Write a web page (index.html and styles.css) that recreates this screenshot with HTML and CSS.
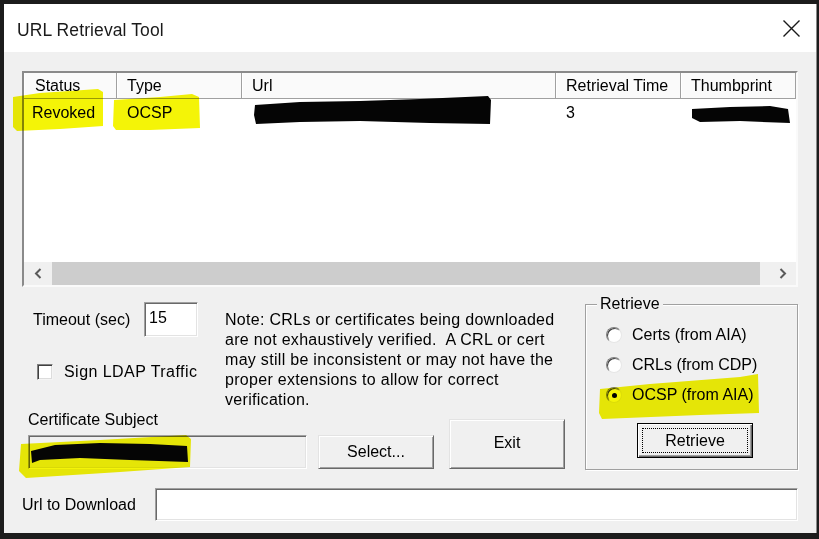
FILE: index.html
```html
<!DOCTYPE html>
<html lang="en">
<head>
  <meta charset="UTF-8" />
  <title>URL Retrieval Tool</title>
  <link rel="stylesheet" href="styles.css">
</head>
<body>

  <div class="window">
    <div class="titlebar">
      <span class="title">URL Retrieval Tool</span>
      <svg class="close" width="17" height="17" viewBox="0 0 17 17">
        <path d="M0.5 0.5L16.5 16.5M16.5 0.5L0.5 16.5" stroke="#1a1a1a" stroke-width="1.4" fill="none" />
      </svg>
    </div>

    <div class="client">
      <div class="listview">
        <div class="lv-head">
          <div class="col c-status">Status</div>
          <div class="col c-type">Type</div>
          <div class="col c-url">Url</div>
          <div class="col c-time">Retrieval Time</div>
          <div class="col c-thumb">Thumbprint</div>
        </div>
        <div class="lv-body">
          <div class="lv-row">
            <div class="col c-status first">Revoked</div>
            <div class="col c-type">OCSP</div>
            <div class="col c-url"></div>
            <div class="col c-time">3</div>
            <div class="col c-thumb"></div>
          </div>
        </div>
        <div class="hscroll">
          <div class="sb-btn">
            <svg width="8" height="11" viewBox="0 0 8 11"><path d="M6.5 1L2 5.5L6.5 10" stroke="#5a5a5a" stroke-width="2" fill="none" /></svg>
          </div>
          <div class="sb-track"><div class="sb-thumb"></div></div>
          <div class="sb-btn">
            <svg width="8" height="11" viewBox="0 0 8 11"><path d="M1.5 1L6 5.5L1.5 10" stroke="#5a5a5a" stroke-width="2" fill="none" /></svg>
          </div>
        </div>
      </div>

      <div class="lower">
        <div class="lower-left">
          <div class="upper-row">
            <div class="opts">
              <div class="timeout">
                <label for="timeout">Timeout (sec)</label>
                <input class="field" id="timeout" type="text" value="15" />
              </div>
              <div class="check">
                <span class="checkbox"></span>
                <span class="check-label">Sign LDAP Traffic</span>
              </div>
            </div>
            <p class="note">
              Note: CRLs or certificates being downloaded<br>
              are not exhaustively verified.&nbsp; A CRL or cert<br>
              may still be inconsistent or may not have the<br>
              proper extensions to allow for correct<br>
              verification.
            </p>
          </div>
          <div class="subject-row">
            <div class="subject">
              <div class="subject-label">Certificate Subject</div>
              <div class="field subject-field"></div>
            </div>
            <button class="btn btn-select">Select...</button>
            <button class="btn btn-exit">Exit</button>
          </div>
        </div>

        <fieldset class="group">
          <legend>Retrieve</legend>
          <div class="radio"><span class="dot"></span>Certs (from AIA)</div>
          <div class="radio"><span class="dot"></span>CRLs (from CDP)</div>
          <div class="radio"><span class="dot on"></span>OCSP (from AIA)</div>
          <button class="btn btn-default"><span class="focus">Retrieve</span></button>
        </fieldset>
      </div>

      <div class="url-row">
        <span class="url-label">Url to Download</span>
        <div class="field url-field"></div>
      </div>
    </div>
  </div>

  <!-- highlighter and redaction marks drawn over the dialog -->
  <svg class="marks" width="819" height="539" viewBox="0 0 819 539">
    <g fill="#f4f407">
      <polygon points="13,97 40,93 98,89 103,92 103,126 60,129 17,131 13,127" />
      <polygon points="114,100 160,97 192,94 199,97 200,128 150,130 116,130 113,126" />
      <polygon points="21,444 100,440 186,435 191,439 190,467 120,472 26,478 19,471" />
      <polygon points="600,389 650,384 740,377 758,374 759,413 700,415 602,419 599,413" />
    </g>
    <g fill="#050505">
      <polygon points="255,105 300,102 360,101 420,99 488,96 491,100 490,124 430,123 360,121 300,122 256,124 254,115" />
      <polygon points="692,109 730,107 770,106 788,109 790,123 740,121 700,122 692,118" />
      <polygon points="31,451 55,445 100,443 150,444 187,446 188,462 130,460 80,458 40,460 32,463" />
    </g>
  </svg>

</body>
</html>
```

FILE: styles.css
```css
* {
  margin: 0;
  padding: 0;
  box-sizing: border-box;
}
body {
  background-color: #1c1c1c;
  font-family: "Liberation Sans", Arial, sans-serif;
  font-size: 16px;
  color: #000;
  padding: 4px 0 0 4px;
  height: 539px;
  overflow: hidden;
}
.window {
  width: 813px;
  height: 529px;
  background-color: #f0f0f0;
  border-right: 1px solid #8a8a8a;
}
.titlebar {
  height: 48px;
  background-color: #fff;
  display: flex;
  align-items: center;
  justify-content: space-between;
  padding: 4px 16px 0 13px;
}
.title {
  font-size: 17.5px;
  letter-spacing: 0.1px;
  color: #1a1a1a;
}
.close {
  margin-top: -4px;
}
.client {
  padding: 19px 18px 0 18px;
}

/* list view */
.listview {
  height: 216px;
  display: flex;
  flex-direction: column;
  background-color: #fff;
  border: 2px solid;
  border-color: #8a8a8a #fafafa #fafafa #8a8a8a;
}
.lv-head, .lv-row {
  display: flex;
}
.col {
  white-space: nowrap;
  overflow: hidden;
  padding-left: 10px;
}
.c-status { width: 93px; }
.c-type { width: 125px; }
.c-url { width: 314px; }
.c-time { width: 125px; }
.c-thumb { flex: 1; }
.lv-head {
  height: 26px;
  background-color: #fafafa;
}
.lv-head .col {
  line-height: 26px;
  box-shadow: inset -1px -1px #a0a0a0, inset 1px 0 #fff;
}
.lv-head .c-status {
  padding-left: 11px;
}
.lv-body {
  flex: 1;
}
.lv-row .col {
  line-height: 28px;
}
.lv-row .first {
  padding-left: 8px;
}
.hscroll {
  height: 23px;
  display: flex;
  background-color: #f0f0f0;
}
.sb-btn {
  width: 27px;
  display: flex;
  align-items: center;
  justify-content: center;
}
.sb-track {
  flex: 1;
  padding: 0 9px 0 1px;
}
.sb-thumb {
  height: 100%;
  background-color: #cdcdcd;
}

/* common controls */
.field {
  font: inherit;
  background-color: #fff;
  border: 1px solid;
  border-color: #a0a0a0 #fff #fff #a0a0a0;
  box-shadow: inset 1px 1px #696969, inset -1px -1px #e3e3e3;
}
.btn {
  font: inherit;
  color: #000;
  background-color: #f0f0f0;
  border: 1px solid;
  border-color: #e3e3e3 #696969 #696969 #e3e3e3;
  box-shadow: inset 1px 1px #fff, inset -1px -1px #a0a0a0;
}

/* lower area */
.lower {
  display: flex;
  margin-top: 7px;
  height: 176px;
}
.lower-left {
  width: 563px;
}
.upper-row {
  display: flex;
  height: 116px;
}
.opts {
  width: 203px;
}
.timeout {
  display: flex;
  align-items: center;
  margin-top: 8px;
  padding-left: 11px;
  height: 35px;
}
.timeout label {
  width: 111px;
}
.timeout input {
  width: 54px;
  height: 35px;
  padding: 0 0 4px 4px;
  outline: none;
}
.check {
  display: flex;
  align-items: center;
  margin-top: 25px;
  padding-left: 15px;
  height: 20px;
}
.check-label {
  letter-spacing: 0.45px;
}
.checkbox {
  width: 16px;
  height: 16px;
  margin-right: 11px;
  background-color: #fff;
  border: 1px solid;
  border-color: #808080 #f4f4f4 #f4f4f4 #808080;
  box-shadow: inset 1px 1px #404040, inset -1px -1px #dcdcdc;
}
.note {
  margin-top: 16px;
  line-height: 20px;
  letter-spacing: 0.3px;
  white-space: nowrap;
}
.subject-row {
  display: flex;
  align-items: flex-end;
  height: 59px;
  padding-left: 6px;
}
.subject-label {
  line-height: 20px;
}
.subject-field {
  margin-top: 5px;
  width: 279px;
  height: 34px;
  background-color: #f0f0f0;
}
.btn-select {
  margin-left: 11px;
  width: 116px;
  height: 34px;
}
.btn-exit {
  margin-left: 15px;
  width: 116px;
  height: 50px;
  padding-bottom: 2px;
}

/* retrieve group */
.group {
  width: 213px;
  height: 176px;
  border: 1px solid #a0a0a0;
  box-shadow: 1px 1px #fff, inset 1px 1px #fff;
}
.group legend {
  margin-left: 11px;
  padding: 0 3px;
  line-height: 20px;
  background-color: #f0f0f0;
}
.radio {
  display: flex;
  align-items: center;
  height: 20px;
  margin-top: 10px;
  padding-left: 20px;
}
.group legend + .radio {
  margin-top: 11px;
}
.dot {
  width: 16px;
  height: 16px;
  margin-right: 10px;
  border-radius: 50%;
  background-color: #fff;
  border: 1px solid;
  border-color: #808080 #e6e6e6 #e6e6e6 #808080;
  box-shadow: inset 1px 1px #404040;
  display: flex;
  align-items: center;
  justify-content: center;
}
.dot.on::after {
  content: "";
  width: 5px;
  height: 5px;
  border-radius: 50%;
  background-color: #000;
}
.btn-default {
  display: block;
  margin: 18px 0 0 51px;
  width: 116px;
  height: 35px;
  padding: 4px;
  border-color: #000;
  box-shadow: inset 1px 1px #fff, inset -1px -1px #696969, inset -2px -2px #a0a0a0;
}
.btn-default .focus {
  display: block;
  height: 100%;
  line-height: 23px;
  border: 1px dotted #000;
}

/* url row */
.url-row {
  display: flex;
  align-items: center;
  margin-top: 18px;
}
.url-label {
  width: 133px;
}
.url-field {
  width: 643px;
  height: 33px;
}

.marks {
  position: absolute;
  top: 0;
  left: 0;
  mix-blend-mode: multiply;
  pointer-events: none;
}
```
